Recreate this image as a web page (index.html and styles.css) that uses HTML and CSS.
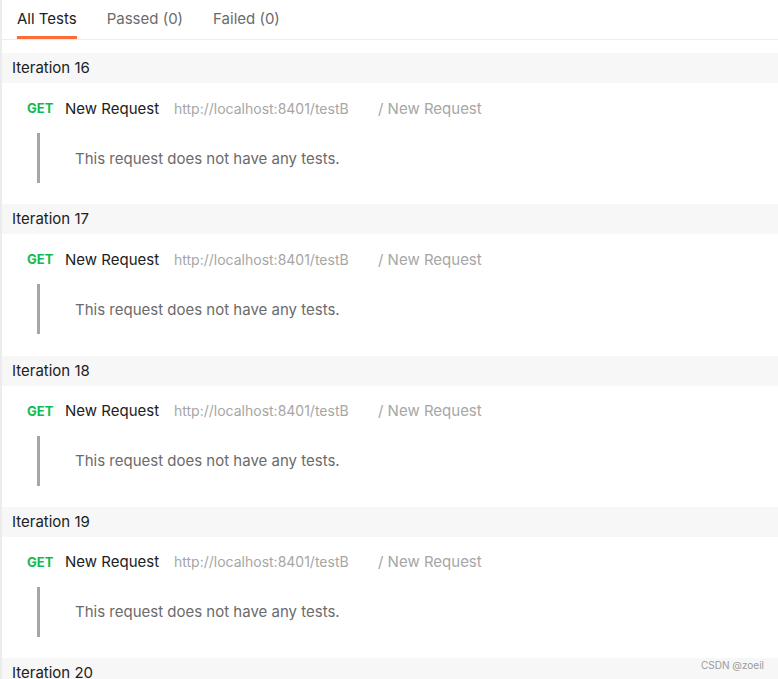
FILE: index.html
```html
<!DOCTYPE html>
<html>
<head>
<meta charset="utf-8">
<link rel="stylesheet" href="styles.css">
</head>
<body>
<div class="page">
  <div class="tabs">
    <div class="tab active">All Tests</div>
    <div class="tab">Passed (0)</div>
    <div class="tab">Failed (0)</div>
  </div>
  <div class="list">
    <section class="iteration">
      <div class="iter-head">Iteration 16</div>
      <div class="req">
        <span class="method">GET</span>
        <span class="name">New Request</span>
        <span class="url">http://localhost:8401/testB</span>
        <span class="path">/ New Request</span>
      </div>
      <div class="tests"><span class="msg">This request does not have any tests.</span></div>
    </section>
    <section class="iteration">
      <div class="iter-head">Iteration 17</div>
      <div class="req">
        <span class="method">GET</span>
        <span class="name">New Request</span>
        <span class="url">http://localhost:8401/testB</span>
        <span class="path">/ New Request</span>
      </div>
      <div class="tests"><span class="msg">This request does not have any tests.</span></div>
    </section>
    <section class="iteration">
      <div class="iter-head">Iteration 18</div>
      <div class="req">
        <span class="method">GET</span>
        <span class="name">New Request</span>
        <span class="url">http://localhost:8401/testB</span>
        <span class="path">/ New Request</span>
      </div>
      <div class="tests"><span class="msg">This request does not have any tests.</span></div>
    </section>
    <section class="iteration">
      <div class="iter-head">Iteration 19</div>
      <div class="req">
        <span class="method">GET</span>
        <span class="name">New Request</span>
        <span class="url">http://localhost:8401/testB</span>
        <span class="path">/ New Request</span>
      </div>
      <div class="tests"><span class="msg">This request does not have any tests.</span></div>
    </section>
    <section class="iteration">
      <div class="iter-head">Iteration 20</div>
    </section>
  </div>
  <div class="watermark">CSDN @zoeil</div>
</div>
</body>
</html>
```

FILE: styles.css
```css
* { box-sizing: border-box; }
html, body { margin: 0; padding: 0; background: #fff; }
body {
  font-family: Inter, "Noto Sans", sans-serif;
  overflow: hidden;
  height: 679px;
}
.page {
  position: relative;
  height: 679px;
  border-left: 2px solid #ececec;
}
.tabs {
  display: flex;
  gap: 30px;
  padding-left: 15px;
  height: 40px;
  border-bottom: 1px solid #ededed;
}
.tab {
  font-size: 15px;
  color: #6b6b6b;
  line-height: 37px;
  height: 39px;
  border-bottom: 3px solid transparent;
}
.tab.active {
  color: #212121;
  border-bottom-color: #ff6c37;
}
.list { padding-top: 13px; }
.iteration { padding-bottom: 21.25px; }
.iter-head {
  background: #f7f7f7;
  height: 30px;
  line-height: 30px;
  padding-left: 10px;
  font-size: 15px;
  color: #212121;
}
.req {
  display: flex;
  align-items: center;
  height: 50px;
  padding-left: 25px;
  font-size: 15px;
}
.method {
  color: #0cbb52;
  font-weight: 700;
  font-size: 13px;
  width: 38px;
}
.name { color: #212121; width: 109px; }
.url { color: #a6a6a6; font-size: 14px; width: 204px; }
.path { color: #a6a6a6; }
.tests {
  margin-left: 35px;
  height: 50px;
  border-left: 3px solid #a6a6a6;
  display: flex;
  align-items: center;
  padding-left: 35px;
}
.msg { font-size: 15px; color: #6b6b6b; }
.watermark {
  position: absolute;
  right: 14px;
  top: 659px;
  font-size: 10px;
  color: #9a9a9a;
}
```
